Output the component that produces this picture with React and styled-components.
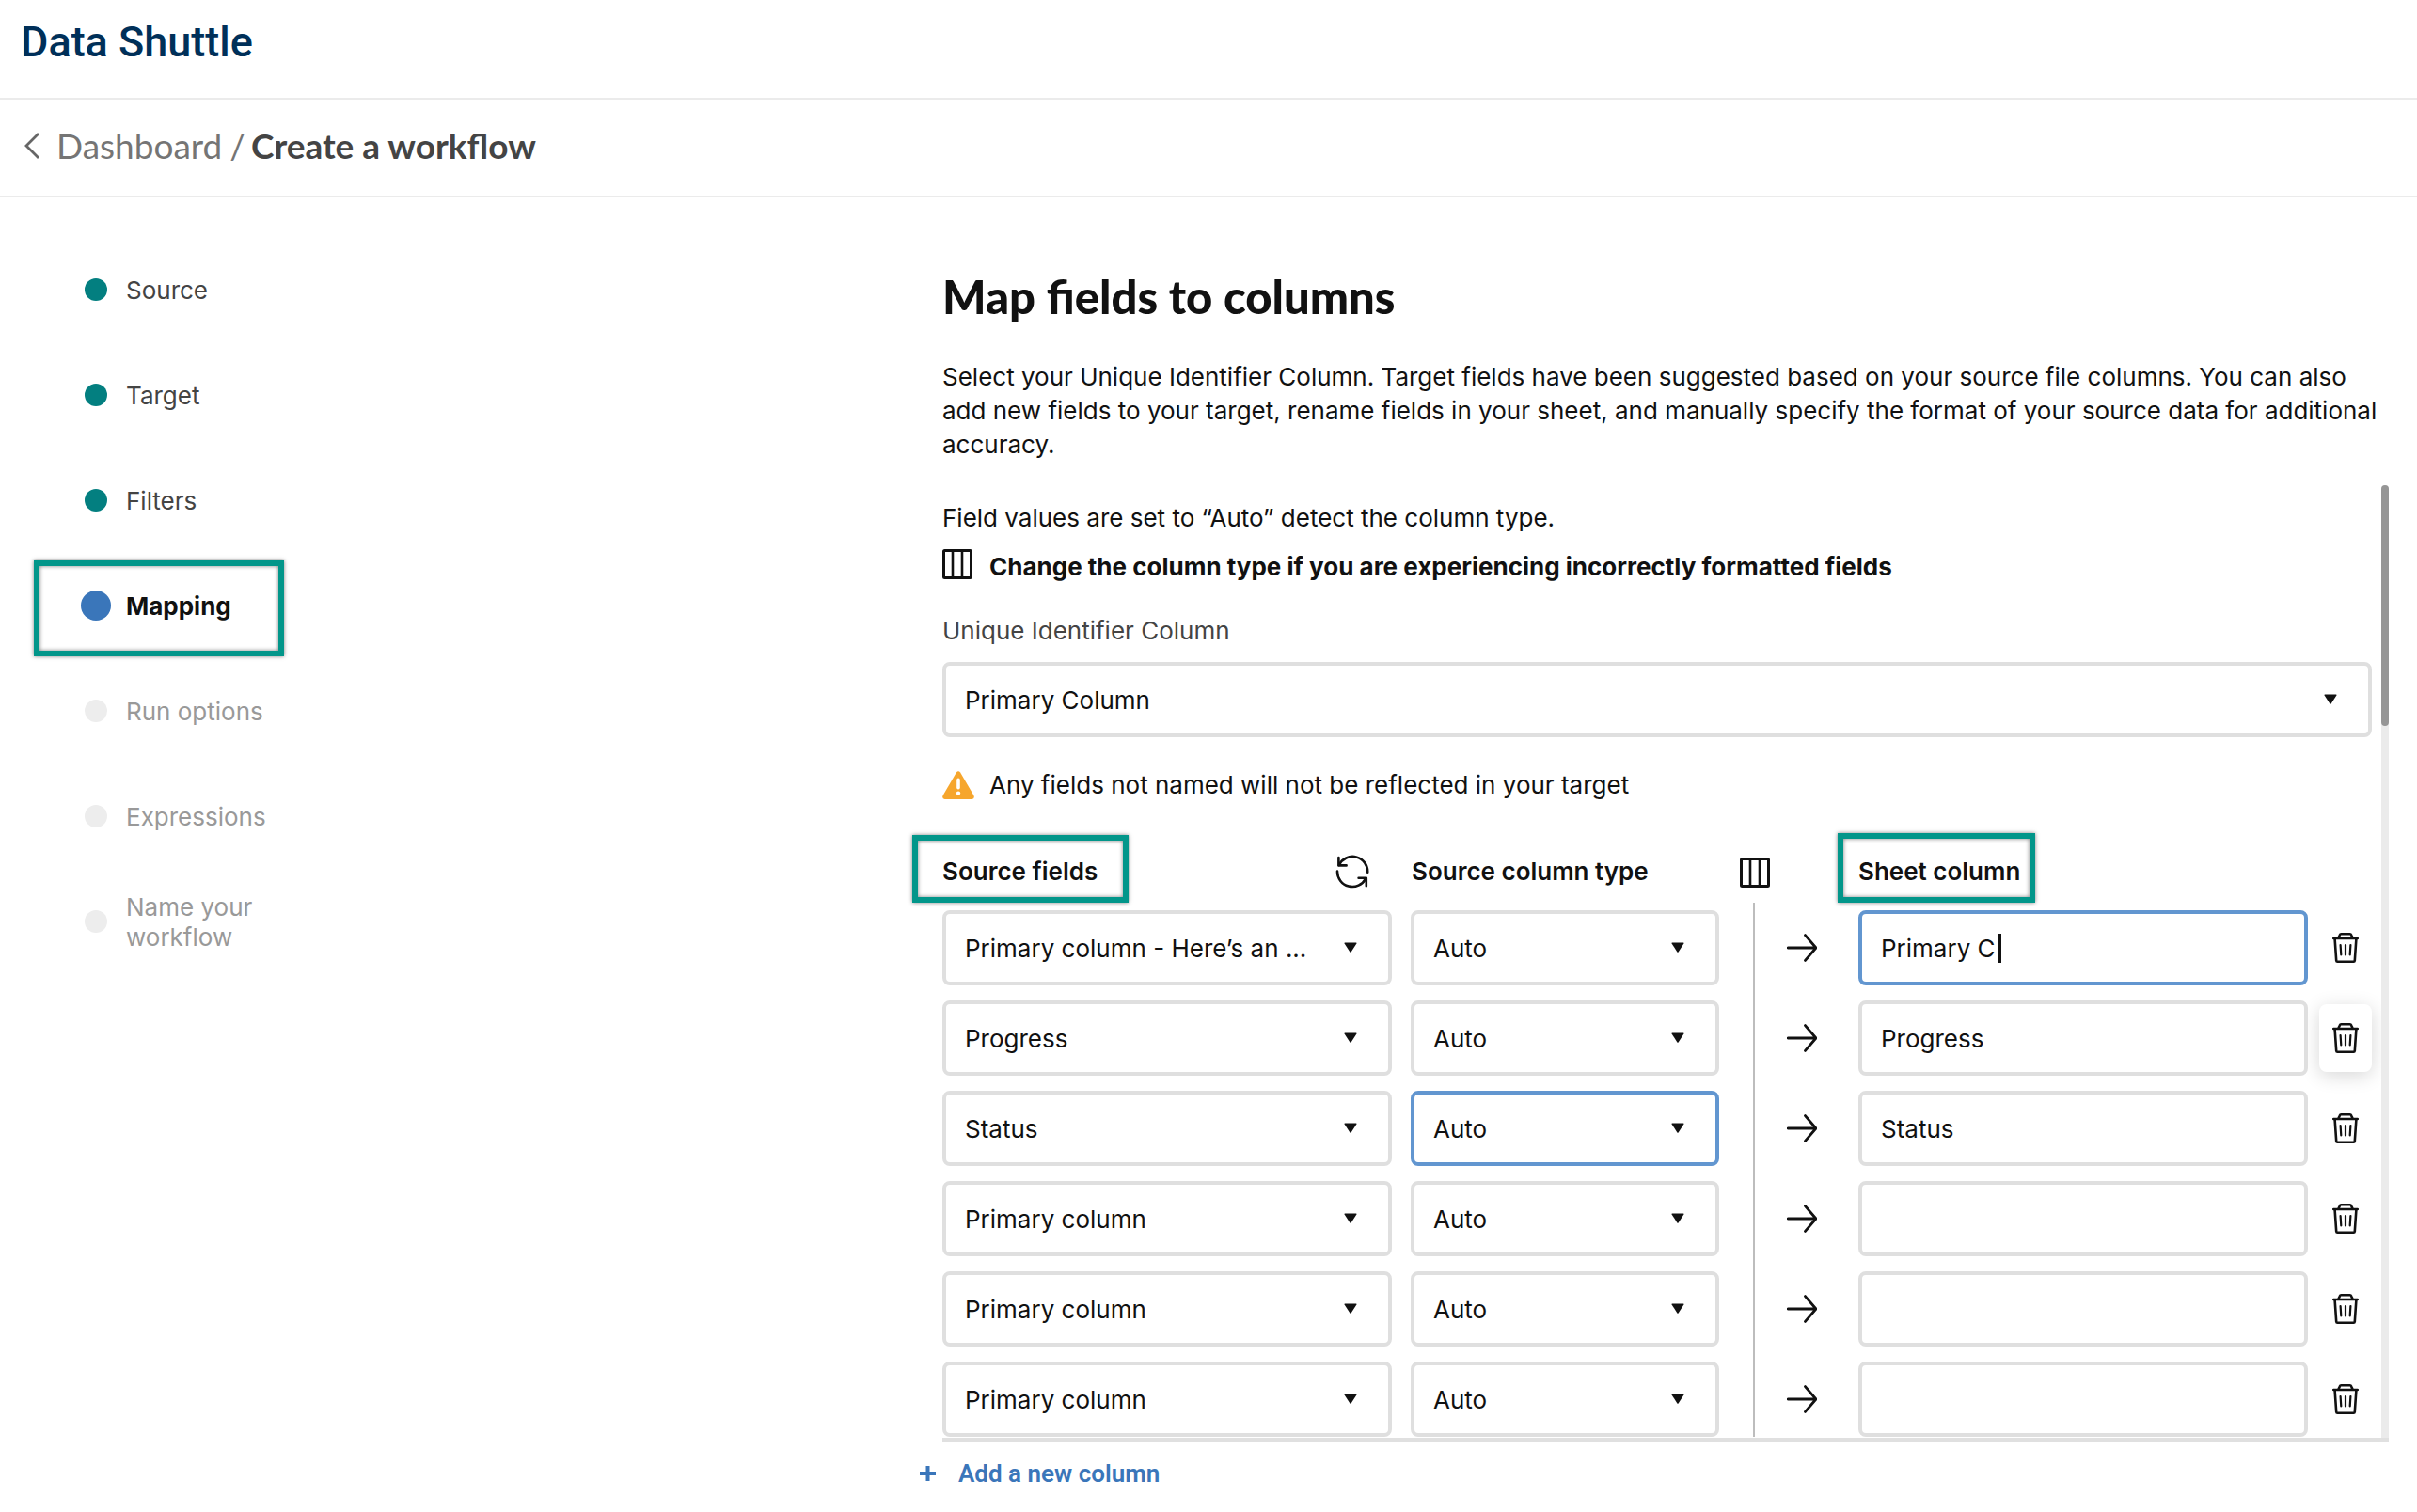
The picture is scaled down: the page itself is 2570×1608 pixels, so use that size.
import { useState } from "react";
import styled, { createGlobalStyle, css } from "styled-components";

const steps = [
  { label: "Source", status: "done" },
  { label: "Target", status: "done" },
  { label: "Filters", status: "done" },
  { label: "Mapping", status: "active" },
  { label: "Run options", status: "pending" },
  { label: "Expressions", status: "pending" },
  { label: "Name your workflow", status: "pending" },
];

const initialRows = [
  { id: 1, source: "Primary column - Here’s an ...", sheet: "Primary C", editing: true },
  { id: 2, source: "Progress", sheet: "Progress", hovered: true },
  { id: 3, source: "Status", sheet: "Status", typeFocused: true },
  { id: 4, source: "Primary column", sheet: "" },
  { id: 5, source: "Primary column", sheet: "" },
  { id: 6, source: "Primary column", sheet: "" },
];

const ColumnsIcon = () => (
  <svg width="32" height="32" viewBox="0 0 32 32" fill="none" stroke="#111" aria-hidden="true">
    <rect x="1.5" y="1.5" width="29" height="29" rx="1" strokeWidth="3" />
    <path d="M11 2v28M21 2v28" strokeWidth="2.6" />
  </svg>
);

const RefreshIcon = () => (
  <svg
    width="36"
    height="36"
    viewBox="0 0 36 36"
    fill="none"
    stroke="#111"
    strokeWidth="2.6"
    strokeLinecap="round"
    strokeLinejoin="round"
    aria-hidden="true"
  >
    <path d="M3.4 3v8.4h8.2" />
    <path d="M3.8 11A16 16 0 0 1 34.2 18.6" />
    <path d="M32.8 33.2v-8.4h-8.2" />
    <path d="M32.2 25.4A16 16 0 0 1 2 17.6" />
  </svg>
);

const ArrowIcon = () => (
  <svg
    width="32"
    height="32"
    viewBox="0 0 32 32"
    fill="none"
    stroke="#111"
    strokeWidth="2.8"
    strokeLinecap="round"
    strokeLinejoin="round"
    aria-hidden="true"
  >
    <path d="M1.3 16h29M19.5 2.6L31 16L19.5 29.4" />
  </svg>
);

const TrashIcon = () => (
  <svg
    width="28"
    height="32"
    viewBox="0 0 28 32"
    fill="none"
    stroke="#111"
    strokeWidth="2.6"
    strokeLinecap="round"
    strokeLinejoin="round"
    aria-hidden="true"
  >
    <path d="M1.2 6h25.6M6.4 5.6L7.8 2.4Q8.2 1.3 9.4 1.3h9.2q1.2 0 1.6 1.1l1.4 3.2" />
    <path d="M2.6 6.4L4.2 29.6q.1 1.1 1.2 1.1h17.2q1.1 0 1.2-1.1L25.4 6.4" />
    <path d="M8.6 13l.7 10.4M14 13v10.4M19.4 13l-.7 10.4" strokeWidth="2.2" />
  </svg>
);

const WarningIcon = () => (
  <svg width="34" height="30" viewBox="0 0 34 30" aria-hidden="true">
    <path
      d="M14.9 1.6Q17-1.2 19.1 1.6L33.4 26q1.4 3.6-2 4H2.6q-3.4-.4-2-4z"
      fill="#f6a62d"
    />
    <path d="M17 9.4v8.4" stroke="#fff" strokeWidth="3.6" strokeLinecap="round" />
    <circle cx="17" cy="23.6" r="2.2" fill="#fff" />
  </svg>
);

const ChevronLeft = () => (
  <svg width="16" height="28" viewBox="0 0 16 28" fill="none" stroke="#666" strokeWidth="2.8" aria-hidden="true">
    <path d="M15 1L2 14l13 13" />
  </svg>
);

const PlusIcon = () => (
  <svg width="17" height="18" viewBox="0 0 17 18" stroke="#3a76ba" strokeWidth="4" aria-hidden="true">
    <path d="M8.5 1v16M0 9h17" />
  </svg>
);

const Dropdown = ({ options, focused, ...rest }) => (
  <SelectBox>
    <Select $focused={focused} {...rest}>
      {options.map((option) => (
        <option key={option}>{option}</option>
      ))}
    </Select>
    <Caret width="14" height="11" viewBox="0 0 14 11" aria-hidden="true">
      <path d="M1 .5h12q.8.1.4.9L7.6 10.5q-.6.7-1.2 0L.6 1.4Q.2.6 1 .5z" fill="#111" />
    </Caret>
  </SelectBox>
);

const MappingRow = ({ row, onRename, onRemove }) => (
  <tr>
    <Cell>
      <Dropdown aria-label="Source field" options={[row.source]} />
    </Cell>
    <Cell $left={20}>
      <Dropdown aria-label="Source column type" options={["Auto"]} focused={row.typeFocused} />
    </Cell>
    <Cell />
    <ArrowCell>
      <ArrowIcon />
    </ArrowCell>
    <Cell>
      <SelectBox>
        <TextInput
          type="text"
          aria-label="Sheet column"
          value={row.sheet}
          $focused={row.editing}
          onChange={(e) => onRename(row.id, e.target.value)}
        />
        {row.editing && <TextCursor />}
      </SelectBox>
    </Cell>
    <Cell $left={12}>
      <TrashButton
        type="button"
        aria-label="Remove column"
        $raised={row.hovered}
        onClick={() => onRemove(row.id)}
      >
        <TrashIcon />
      </TrashButton>
    </Cell>
  </tr>
);

const App = () => {
  const [rows, setRows] = useState(initialRows);

  const rename = (id, sheet) =>
    setRows(rows.map((row) => (row.id === id ? { ...row, sheet } : row)));
  const remove = (id) => setRows(rows.filter((row) => row.id !== id));
  const add = () =>
    setRows([...rows, { id: Date.now(), source: "Primary column", sheet: "" }]);

  return (
    <>
      <GlobalStyle />
      <Header>
        <Brand>Data Shuttle</Brand>
      </Header>
      <Breadcrumb>
        <BackLink href="#dashboard">
          <ChevronLeft />
          Dashboard
        </BackLink>
        <Slash>/</Slash>
        <Current>Create a workflow</Current>
      </Breadcrumb>
      <Layout>
        <Steps>
          {steps.map(({ label, status }) => (
            <Step key={label} $status={status}>
              <DotBox>
                <Dot $status={status} />
              </DotBox>
              <StepLabel>{label}</StepLabel>
              {status === "active" && <Frame $inset="8px auto 2px 36px" $width={266} />}
            </Step>
          ))}
        </Steps>
        <Main>
          <Title>Map fields to columns</Title>
          <Paragraph>
            Select your Unique Identifier Column. Target fields have been suggested based on your
            source file columns. You can also add new fields to your target, rename fields in your
            sheet, and manually specify the format of your source data for additional accuracy.
          </Paragraph>
          <ScrollPane>
            <PaneBody>
              <Paragraph>Field values are set to “Auto” detect the column type.</Paragraph>
              <Hint>
                <ColumnsIcon />
                <strong>Change the column type if you are experiencing incorrectly formatted fields</strong>
              </Hint>
              <Label htmlFor="unique-column">Unique Identifier Column</Label>
              <Dropdown id="unique-column" options={["Primary Column"]} />
              <Warning>
                <WarningIcon />
                Any fields not named will not be reflected in your target
              </Warning>
              <Table>
                <colgroup>
                  <col />
                  <Col $width={348} />
                  <Col $width={36} />
                  <Col $width={112} />
                  <col />
                  <Col $width={68} />
                </colgroup>
                <thead>
                  <tr>
                    <HeadCell scope="col">
                      <HeadInner>
                        Source fields
                        <RefreshButton type="button" aria-label="Refresh source fields">
                          <RefreshIcon />
                        </RefreshButton>
                        <Frame $inset="-4px auto 0 -32px" $width={230} />
                      </HeadInner>
                    </HeadCell>
                    <HeadCell scope="col" $left={21}>
                      <HeadInner>Source column type</HeadInner>
                    </HeadCell>
                    <IconCell colSpan="2">
                      <ColumnsIcon />
                    </IconCell>
                    <HeadCell scope="col">
                      <HeadInner>
                        Sheet column
                        <Frame $inset="-6px auto 0 -22px" $width={210} />
                      </HeadInner>
                    </HeadCell>
                    <td />
                  </tr>
                </thead>
                <tbody>
                  {rows.map((row) => (
                    <MappingRow key={row.id} row={row} onRename={rename} onRemove={remove} />
                  ))}
                </tbody>
              </Table>
            </PaneBody>
            <Track>
              <Thumb />
            </Track>
          </ScrollPane>
          <AddButton type="button" onClick={add}>
            <PlusIcon />
            Add a new column
          </AddButton>
        </Main>
      </Layout>
    </>
  );
};

export default App;

const GlobalStyle = createGlobalStyle`
  * {
    box-sizing: border-box;
  }
  body {
    margin: 0;
    background: #fff;
    color: #111;
    font: 400 26px/36px Inter, sans-serif;
  }
  svg {
    display: block;
    flex: none;
  }
`;

const Header = styled.header`
  display: flex;
  align-items: center;
  height: 106px;
  padding: 0 22px 14px;
  border-bottom: 2px solid #ebebeb;
`;

const Brand = styled.span`
  font: 500 45px/60px Roboto, sans-serif;
  color: #003059;
`;

const Breadcrumb = styled.nav`
  display: flex;
  align-items: center;
  height: 104px;
  padding: 0 26px 4px;
  border-bottom: 2px solid #ebebeb;
  font: 400 37px/44px Lato, sans-serif;
`;

const BackLink = styled.a`
  display: flex;
  align-items: center;
  gap: 18px;
  color: #757575;
  text-decoration: none;
`;

const Slash = styled.span`
  margin: 0 6px 0 8px;
  color: #757575;
`;

const Current = styled.span`
  color: #444;
  font-weight: 700;
`;

const Layout = styled.div`
  display: grid;
  grid-template-columns: 970px minmax(0, 1fr);
`;

const Steps = styled.ol`
  margin: 0;
  padding: 42px 0 0;
  list-style: none;
`;

const stepColor = { done: "#444", active: "#111", pending: "#999" };
const dotColor = { done: "#037f80", active: "#3a76ba", pending: "#ededed" };

const Step = styled.li`
  position: relative;
  display: flex;
  align-items: center;
  height: 112px;
  padding-left: 86px;
  line-height: 32px;
  color: ${({ $status }) => stepColor[$status]};
  font-weight: ${({ $status }) => ($status === "active" ? 700 : 400)};
`;

const DotBox = styled.span`
  display: flex;
  justify-content: center;
  width: 32px;
  margin-right: 16px;
`;

const Dot = styled.span`
  width: ${({ $status }) => ($status === "active" ? 32 : 24)}px;
  height: ${({ $status }) => ($status === "active" ? 32 : 24)}px;
  border-radius: 50%;
  background: ${({ $status }) => dotColor[$status]};
`;

const StepLabel = styled.span`
  max-width: 170px;
  padding-top: 2px;
`;

// callout frame laid over the part it points at
const Frame = styled.span`
  position: absolute;
  inset: ${({ $inset }) => $inset};
  width: ${({ $width }) => $width}px;
  border: 6px solid #02968a;
  box-shadow: 0 0 4px rgba(0, 0, 0, 0.5), inset 0 0 4px rgba(0, 0, 0, 0.5);
  pointer-events: none;
`;

const Main = styled.main`
  padding: 75px 30px 20px 32px;
`;

const Title = styled.h1`
  margin: 0 0 38px;
  font: 900 49px/60px Lato, sans-serif;
`;

const Paragraph = styled.p`
  margin: 0;
`;

const ScrollPane = styled.div`
  display: flex;
  gap: 10px;
  margin-top: 25px;
  border-bottom: 5px solid #e0e0e0;
`;

const PaneBody = styled.div`
  flex: 1;
  min-width: 0;
  padding: 17px 0 1px;
`;

const Track = styled.div`
  width: 8px;
  border-radius: 4px 4px 0 0;
  background: #ebebeb;
`;

const Thumb = styled.div`
  height: 256px;
  border-radius: 4px;
  background: #969696;
`;

const Hint = styled.p`
  display: flex;
  gap: 18px;
  margin: 15px 0 32px;

  strong {
    padding-top: 1px;
    font-weight: 700;
  }
`;

const Label = styled.label`
  display: block;
  margin-bottom: 15px;
  color: #444;
`;

const Warning = styled.p`
  display: flex;
  align-items: center;
  gap: 16px;
  margin: 33px 0 39px;
`;

const SelectBox = styled.div`
  position: relative;
`;

const control = css`
  display: block;
  width: 100%;
  height: 80px;
  padding: 0 20px;
  border: 4px solid ${({ $focused }) => ($focused ? "#6296d0" : "#dfdfdf")};
  border-radius: 8px;
  outline: none;
  background: #fff;
  color: #111;
  font: inherit;
`;

const Select = styled.select`
  ${control}
  padding-top: 2px;
  appearance: none;
`;

const TextInput = styled.input`
  ${control}
`;

const Caret = styled.svg`
  position: absolute;
  top: 34px;
  right: 37px;
  pointer-events: none;
`;

const TextCursor = styled.span`
  position: absolute;
  top: 25px;
  left: 149px;
  width: 3px;
  height: 31px;
  background: #111;
`;

const Table = styled.table`
  width: 100%;
  table-layout: fixed;
  border-spacing: 0;

  tbody tr:last-child td {
    height: 88px;
    padding-bottom: 0;
  }
`;

const Col = styled.col`
  width: ${({ $width }) => $width}px;
`;

const HeadCell = styled.th`
  height: 68px;
  padding: 0 0 0 ${({ $left = 0 }) => $left}px;
  font-weight: 600;
  text-align: left;
`;

const HeadInner = styled.div`
  position: relative;
  display: flex;
  align-items: center;
  height: 68px;
  padding-top: 2px;
`;

const RefreshButton = styled.button`
  margin-left: auto;
  margin-right: 24px;
  padding: 0;
  border: none;
  background: none;
`;

const IconCell = styled.td`
  padding: 4px 0 0 22px;
`;

const Cell = styled.td`
  height: 96px;
  padding: 8px 0 8px ${({ $left = 0 }) => $left}px;
`;

const ArrowCell = styled(Cell)`
  padding-left: 34px;
  border-left: 2px solid #bdbdbd;
`;

const TrashButton = styled.button`
  display: flex;
  align-items: center;
  justify-content: center;
  width: 56px;
  height: 72px;
  padding: 0;
  border: none;
  border-radius: 8px;
  background: #fff;
  box-shadow: ${({ $raised }) => ($raised ? "0 4px 20px rgba(0, 0, 0, 0.16)" : "none")};
`;

const AddButton = styled.button`
  display: flex;
  align-items: center;
  gap: 24px;
  margin: 15px 0 0 -24px;
  padding: 0;
  border: none;
  background: none;
  color: #3a76ba;
  font: 600 26px/36px Roboto, sans-serif;
`;
